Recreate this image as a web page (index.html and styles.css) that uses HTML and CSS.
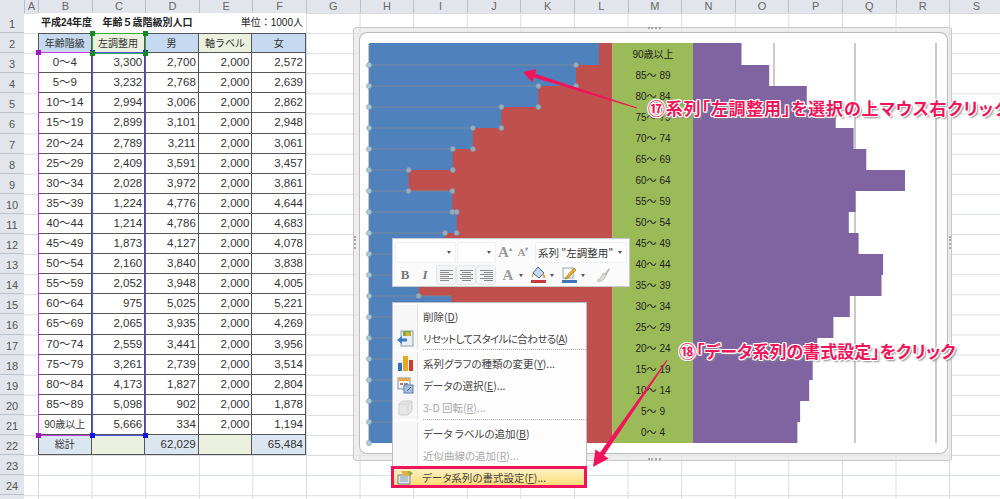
FILE: index.html
```html
<!DOCTYPE html>
<html lang="ja">
<head>
    <meta charset="UTF-8">
    <title>人口ピラミッド</title>
    <link rel="stylesheet" href="styles.css">
</head>
<body>
<div class="sheet">
    <div class="col-heads">
        <div class="corner"></div>
        <div class="col col-a">A</div>
        <div class="col">B</div><div class="col">C</div><div class="col">D</div><div class="col">E</div>
        <div class="col">F</div><div class="col">G</div><div class="col">H</div><div class="col">I</div>
        <div class="col">J</div><div class="col">K</div><div class="col">L</div><div class="col">M</div>
        <div class="col">N</div><div class="col">O</div><div class="col">P</div><div class="col">Q</div>
        <div class="col">R</div><div class="col">S</div>
    </div>

    <div class="sheet-body">
        <div class="row-heads">
            <div>1</div><div>2</div><div>3</div><div>4</div><div>5</div><div>6</div>
            <div>7</div><div>8</div><div>9</div><div>10</div><div>11</div><div>12</div>
            <div>13</div><div>14</div><div>15</div><div>16</div><div>17</div><div>18</div>
            <div>19</div><div>20</div><div>21</div><div>22</div><div>23</div><div>24</div>
        </div>

        <div class="cells">
            <div class="pop-table">
                <div class="title">平成24年度</div>
                <div class="title title-main">年齢５歳階級別人口</div>
                <div class="title title-unit">単位：1000人</div>

                <div class="cell head blue">年齢階級</div>
                <div class="cell head green">左調整用</div>
                <div class="cell head blue">男</div>
                <div class="cell head green">軸ラベル</div>
                <div class="cell head blue">女</div>

                <div class="cell age">0～4</div><div class="cell">3,300</div><div class="cell">2,700</div><div class="cell">2,000</div><div class="cell">2,572</div>
                <div class="cell age">5～9</div><div class="cell">3,232</div><div class="cell">2,768</div><div class="cell">2,000</div><div class="cell">2,639</div>
                <div class="cell age">10～14</div><div class="cell">2,994</div><div class="cell">3,006</div><div class="cell">2,000</div><div class="cell">2,862</div>
                <div class="cell age">15～19</div><div class="cell">2,899</div><div class="cell">3,101</div><div class="cell">2,000</div><div class="cell">2,948</div>
                <div class="cell age">20～24</div><div class="cell">2,789</div><div class="cell">3,211</div><div class="cell">2,000</div><div class="cell">3,061</div>
                <div class="cell age">25～29</div><div class="cell">2,409</div><div class="cell">3,591</div><div class="cell">2,000</div><div class="cell">3,457</div>
                <div class="cell age">30～34</div><div class="cell">2,028</div><div class="cell">3,972</div><div class="cell">2,000</div><div class="cell">3,861</div>
                <div class="cell age">35～39</div><div class="cell">1,224</div><div class="cell">4,776</div><div class="cell">2,000</div><div class="cell">4,644</div>
                <div class="cell age">40～44</div><div class="cell">1,214</div><div class="cell">4,786</div><div class="cell">2,000</div><div class="cell">4,683</div>
                <div class="cell age">45～49</div><div class="cell">1,873</div><div class="cell">4,127</div><div class="cell">2,000</div><div class="cell">4,078</div>
                <div class="cell age">50～54</div><div class="cell">2,160</div><div class="cell">3,840</div><div class="cell">2,000</div><div class="cell">3,838</div>
                <div class="cell age">55～59</div><div class="cell">2,052</div><div class="cell">3,948</div><div class="cell">2,000</div><div class="cell">4,005</div>
                <div class="cell age">60～64</div><div class="cell">975</div><div class="cell">5,025</div><div class="cell">2,000</div><div class="cell">5,221</div>
                <div class="cell age">65～69</div><div class="cell">2,065</div><div class="cell">3,935</div><div class="cell">2,000</div><div class="cell">4,269</div>
                <div class="cell age">70～74</div><div class="cell">2,559</div><div class="cell">3,441</div><div class="cell">2,000</div><div class="cell">3,956</div>
                <div class="cell age">75～79</div><div class="cell">3,261</div><div class="cell">2,739</div><div class="cell">2,000</div><div class="cell">3,514</div>
                <div class="cell age">80～84</div><div class="cell">4,173</div><div class="cell">1,827</div><div class="cell">2,000</div><div class="cell">2,804</div>
                <div class="cell age">85～89</div><div class="cell">5,098</div><div class="cell">902</div><div class="cell">2,000</div><div class="cell">1,878</div>
                <div class="cell age age-text">90歳以上</div><div class="cell">5,666</div><div class="cell">334</div><div class="cell">2,000</div><div class="cell">1,194</div>

                <div class="cell head total">総計</div>
                <div class="cell total-blank"></div>
                <div class="cell num-total">62,029</div>
                <div class="cell total-blank"></div>
                <div class="cell num-total">65,484</div>

                <!-- source ranges of the selected series -->
                <div class="range range-cats"><i class="knob tl"></i><i class="knob bl"></i></div>
                <div class="range range-vals"><i class="knob tl"></i><i class="knob tr"></i><i class="knob bl"></i><i class="knob br"></i></div>
                <div class="range range-name"><i class="knob tl"></i><i class="knob tr"></i><i class="knob bl"></i><i class="knob br"></i></div>
            </div>
        </div>
    </div>
</div>

<div class="chart">
    <i class="grip grip-top"></i>
    <i class="grip grip-bottom"></i>
    <i class="grip grip-side grip-left"></i>
    <i class="grip grip-side grip-right"></i>
    <div class="chart-area">
        <svg class="plot" viewBox="360 33 587 420" width="587" height="420">
            <rect class="series-red" x="369" y="43" width="243.5" height="400"/>
            <rect class="series-green" x="612.5" y="43" width="80.5" height="400"/>
            <path class="gridline" d="M774 43V443M855 43V443M936 43V443"/>
            <polygon class="series-blue" points="369,43 599,43 599,65 576,65 576,86 538.4,86 538.4,107 501.4,107 501.4,128 472.9,128 472.9,149 452.8,149 452.8,170 408.6,170 408.6,191 452.3,191 452.3,212 456.7,212 456.7,233 445,233 445,254 418.3,254 418.3,275 418.7,275 418.7,296 451.3,296 451.3,317 466.8,317 466.8,338 482.2,338 482.2,359 486.7,359 486.7,380 490.6,380 490.6,401 500.2,401 500.2,422 503,422 503,443 369,443"/>
            <polygon class="series-purple" points="693,43 741.5,43 741.5,65 769.2,65 769.2,86 806.8,86 806.8,107 835.7,107 835.7,128 853.6,128 853.6,149 866.3,149 866.3,170 905,170 905,191 855.6,191 855.6,212 848.8,212 848.8,233 858.6,233 858.6,254 883.1,254 883.1,275 881.5,275 881.5,296 849.8,296 849.8,317 833.4,317 833.4,338 817.3,338 817.3,359 812.7,359 812.7,380 809.2,380 809.2,401 800.1,401 800.1,422 797.4,422 797.4,443 693,443"/>

            <path class="sel-line" d="M369 44V443M369 65H576M369 86H538M369 107H501M369 128H473M369 149H453M369 170H409M369 191H452M369 212H457M369 233H445M369 254H418M369 275H419M369 296H451M369 317H467M369 338H482M369 359H487M369 380H491M369 401H500M369 422H503"/>

            <g class="knobs-left">
                <circle cx="369" cy="65" r="2.5"/><circle cx="369" cy="86" r="2.5"/><circle cx="369" cy="107" r="2.5"/><circle cx="369" cy="128" r="2.5"/>
                <circle cx="369" cy="149" r="2.5"/><circle cx="369" cy="170" r="2.5"/><circle cx="369" cy="191" r="2.5"/><circle cx="369" cy="212" r="2.5"/>
                <circle cx="369" cy="233" r="2.5"/><circle cx="369" cy="254" r="2.5"/><circle cx="369" cy="275" r="2.5"/><circle cx="369" cy="296" r="2.5"/>
                <circle cx="369" cy="317" r="2.5"/><circle cx="369" cy="338" r="2.5"/><circle cx="369" cy="359" r="2.5"/><circle cx="369" cy="380" r="2.5"/>
                <circle cx="369" cy="401" r="2.5"/><circle cx="369" cy="422" r="2.5"/><circle cx="369" cy="443" r="2.5"/>
            </g>
            <g class="knobs-right">
                <circle cx="576" cy="65" r="2.5"/>
                <circle cx="538.4" cy="86" r="2.5"/><circle cx="576" cy="86" r="2.5"/>
                <circle cx="501.4" cy="107" r="2.5"/><circle cx="538.4" cy="107" r="2.5"/>
                <circle cx="472.9" cy="128" r="2.5"/><circle cx="501.4" cy="128" r="2.5"/>
                <circle cx="452.8" cy="149" r="2.5"/><circle cx="472.9" cy="149" r="2.5"/>
                <circle cx="408.6" cy="170" r="2.5"/><circle cx="452.8" cy="170" r="2.5"/>
                <circle cx="408.6" cy="191" r="2.5"/><circle cx="452.3" cy="191" r="2.5"/>
                <circle cx="452.3" cy="212" r="2.5"/><circle cx="456.7" cy="212" r="2.5"/>
                <circle cx="445" cy="233" r="2.5"/><circle cx="456.7" cy="233" r="2.5"/>
                <circle cx="418.7" cy="296" r="2.5"/>
            </g>

            <g class="cat-labels">
                <text x="653" y="58">90歳以上</text>
                <text x="653" y="79">85～ 89</text>
                <text x="653" y="100">80～ 84</text>
                <text x="653" y="121">75～ 79</text>
                <text x="653" y="142">70～ 74</text>
                <text x="653" y="163">65～ 69</text>
                <text x="653" y="184">60～ 64</text>
                <text x="653" y="205">55～ 59</text>
                <text x="653" y="226">50～ 54</text>
                <text x="653" y="247">45～ 49</text>
                <text x="653" y="268">40～ 44</text>
                <text x="653" y="289">35～ 39</text>
                <text x="653" y="310">30～ 34</text>
                <text x="653" y="331">25～ 29</text>
                <text x="653" y="352">20～ 24</text>
                <text x="653" y="373">15～ 19</text>
                <text x="653" y="394">10～ 14</text>
                <text x="653" y="415">5～ 9</text>
                <text x="653" y="436">0～ 4</text>
            </g>
        </svg>
    </div>
</div>

<div class="mini-bar">
    <div class="bar-row">
        <div class="combo combo-font"><span class="caret"></span></div>
        <div class="combo combo-size"><span class="caret"></span></div>
        <div class="grow-btn">A<sup>▴</sup></div>
        <div class="grow-btn small">A<sup>▾</sup></div>
        <div class="combo combo-series">系列 "左調整用"<span class="caret"></span></div>
    </div>
    <div class="bar-row">
        <div class="tool tool-b">B</div>
        <div class="tool tool-i">I</div>
        <div class="align-btn">
            <svg width="13" height="11" viewBox="0 0 13 11"><path d="M0 .5H13M0 2.5H9M0 4.5H13M0 6.5H9M0 8.5H13M0 10.5H9"/></svg>
        </div>
        <div class="align-btn">
            <svg width="13" height="11" viewBox="0 0 13 11"><path d="M0 .5H13M2 2.5H11M0 4.5H13M2 6.5H11M0 8.5H13M2 10.5H11"/></svg>
        </div>
        <div class="align-btn">
            <svg width="13" height="11" viewBox="0 0 13 11"><path d="M0 .5H13M4 2.5H13M0 4.5H13M4 6.5H13M0 8.5H13M4 10.5H13"/></svg>
        </div>
        <div class="tool tool-a">A</div>
        <span class="caret"></span>
        <svg class="tool-icon" width="16" height="18" viewBox="0 0 16 18">
            <path d="M7 1l6 6-5 5-6-5z" fill="#c9d8ea" stroke="#36689f"/>
            <path d="M2 7c-1 2-2 3-1 4s2-1 1-4z" fill="#d9a020"/>
            <path d="M12 7c1 1 3 3 2 5-2 0-3-2-2-5z" fill="#e8a030"/>
            <rect x="0" y="14" width="15" height="3" fill="#c8383c"/>
        </svg>
        <span class="caret"></span>
        <svg class="tool-icon" width="16" height="18" viewBox="0 0 16 18">
            <rect x="1" y="2" width="10" height="10" fill="#fff" stroke="#8aa"/>
            <path d="M4 11l8-9 2 2-8 8-3 1z" fill="#e8b020" stroke="#9a6a10" stroke-width=".6"/>
            <rect x="0" y="14" width="15" height="3" fill="#3f74bd"/>
        </svg>
        <span class="caret"></span>
        <svg class="tool-icon brush" width="16" height="16" viewBox="0 0 16 16">
            <path d="M9 7l5-6 1 1-4 7z" fill="#bbb"/>
            <path d="M2 13c3-1 5-4 6-7l3 3c-1 3-5 6-8 6z" fill="#d8d8d0" stroke="#b5b5b0" stroke-width=".6"/>
        </svg>
    </div>
</div>

<div class="menu">
    <div class="menu-item"><span class="menu-icon"></span><span class="menu-text">削除(<u>D</u>)</span></div>
    <div class="menu-item">
        <span class="menu-icon">
            <svg width="17" height="17" viewBox="0 0 17 17">
                <rect x="4" y="1" width="12" height="15" fill="#e9eef2" stroke="#8b9fb4"/>
                <path d="M6 1h8v5H6z" fill="#7fa84a"/>
                <path d="M9 2l5 1-1 3-4 0z" fill="#e2b23a"/>
                <path d="M0 10l5-4v2.500h5v3H5V14z" fill="#3f7cc8"/>
            </svg>
        </span>
        <span class="menu-text tight">リセットしてスタイルに合わせる(<u>A</u>)</span>
    </div>
    <div class="menu-sep"></div>
    <div class="menu-item">
        <span class="menu-icon">
            <svg width="17" height="17" viewBox="0 0 17 17">
                <rect x="1" y="8" width="4" height="8" fill="#2f6fc0"/>
                <rect x="6" y="1" width="5" height="15" fill="#e8a820"/>
                <rect x="12" y="5" width="4" height="11" fill="#cc3b2c"/>
            </svg>
        </span>
        <span class="menu-text">系列グラフの種類の変更(<u>Y</u>)...</span>
    </div>
    <div class="menu-item">
        <span class="menu-icon">
            <svg width="17" height="17" viewBox="0 0 17 17">
                <rect x="1" y="1" width="12" height="11" fill="#eef3f8" stroke="#7d94ad"/>
                <rect x="1" y="1" width="12" height="3" fill="#e8a84a"/>
                <rect x="3" y="6" width="3" height="2" fill="#d9734a"/>
                <rect x="7" y="6" width="4" height="2" fill="#7d9cc4"/>
                <rect x="7" y="8" width="9" height="8" fill="#a8bedb" stroke="#5f7ea6"/>
                <path d="M10 14l4-4" stroke="#3c5f90"/>
            </svg>
        </span>
        <span class="menu-text">データの選択(<u>E</u>)...</span>
    </div>
    <div class="menu-item disabled">
        <span class="menu-icon">
            <svg width="17" height="17" viewBox="0 0 17 17">
                <path d="M2 5l4-3h9v10l-4 4H2z" fill="#e6e6e6" stroke="#cfcfcf"/>
                <path d="M2 5h9v11M11 5l4-3" fill="none" stroke="#d4d4d4"/>
            </svg>
        </span>
        <span class="menu-text">3-D 回転(<u>R</u>)...</span>
    </div>
    <div class="menu-sep"></div>
    <div class="menu-item"><span class="menu-icon"></span><span class="menu-text">データ ラベルの追加(<u>B</u>)</span></div>
    <div class="menu-item disabled"><span class="menu-icon"></span><span class="menu-text">近似曲線の追加(<u>R</u>)...</span></div>
    <div class="menu-item active">
        <span class="menu-icon">
            <svg width="17" height="15" viewBox="0 0 17 15">
                <rect x="1" y="5" width="12" height="9" fill="#dfe6ee" stroke="#6f8297"/>
                <path d="M3 7h8M3 9h8M3 11h8" stroke="#8ca0b5"/>
                <path d="M4 1h10l-2 5H7z" fill="#e3b23a"/>
                <path d="M11 1l5 2-3 3z" fill="#7fa84a"/>
            </svg>
        </span>
        <span class="menu-text">データ系列の書式設定(<u>F</u>)...</span>
    </div>
</div>

<svg class="arrows" width="1000" height="499" viewBox="0 0 1000 499">
    <polygon points="523,72 536.500,68.900 535,73.700 637,107.500 637,108.500 533.800,77.500 532.300,82.300"/>
    <polygon points="593,467 595.400,449.400 600,452.600 666.500,360 667.500,360.500 604,455.400 608.600,458.600"/>
</svg>

<div class="note note-17">⑰系列「左調整用」を選択の上マウス右クリック</div>
<div class="note note-18">⑱「データ系列の書式設定」をクリック</div>
</body>
</html>
```

FILE: styles.css
```css
html, body {
    margin: 0;
    padding: 0;
}

body {
    position: relative;
    width: 1000px;
    height: 499px;
    overflow: hidden;
    background-color: #fff;
    color: #333;
    font-family: "Liberation Sans", "Noto Sans CJK JP", sans-serif;
}

/* sheet */

.col-heads {
    display: flex;
    height: 13px;
    background-color: #e2e6ec;
}

.corner {
    width: 24px;
    flex: none;
}

.col {
    flex: none;
    box-sizing: border-box;
    width: 53.6px;
    border-left: 1px solid #b9c0c9;
    font-size: 11px;
    line-height: 13px;
    text-align: center;
    color: #666;
}

.col-a {
    width: 14px;
}

.sheet-body {
    display: flex;
    height: 486px;
}

.row-heads {
    flex: none;
    width: 24px;
    background-color: #e2e6ec;
}

.row-heads div {
    box-sizing: border-box;
    height: 20.1px;
    border-bottom: 1px solid #b9c0c9;
    font-size: 11px;
    line-height: 22px;
    text-align: center;
    color: #555;
}

.cells {
    flex: 1;
    padding-left: 14px;
    background-image:
        linear-gradient(to right, #d9dcdf 1px, transparent 1px),
        linear-gradient(to bottom, #d9dcdf 1px, transparent 1px);
    background-size: 53.6px 20.1px;
    background-position: 14px 0;
}

.pop-table {
    position: relative;
    display: grid;
    grid-template-columns: repeat(5, 53.6px);
    grid-template-rows: repeat(22, 20.1px);
    width: 268px;
}

.title {
    background-color: #fff;
    font-size: 10px;
    font-weight: bold;
    line-height: 20px;
    padding-left: 3px;
    white-space: nowrap;
    color: #222;
}

.title-main {
    grid-column: 2 / span 2;
    padding-left: 11px;
}

.title-unit {
    grid-column: 4 / span 2;
    padding: 0 3px 0 0;
    font-weight: normal;
    text-align: right;
}

.cell {
    box-sizing: border-box;
    border-right: 1px solid #555;
    border-bottom: 1px solid #555;
    padding-right: 2px;
    background-color: #fff;
    font-size: 11.5px;
    line-height: 19px;
    text-align: right;
}

.cell:nth-child(5n + 4) {
    border-left: 1px solid #555;
}

.head {
    padding: 0;
    font-size: 10px;
    text-align: center;
}

.pop-table .head:nth-child(n + 4):nth-child(-n + 8) {
    border-top: 1px solid #555;
}

.blue {
    background-color: #c5d9f1;
}

.green {
    background-color: #ebf1de;
}

.age {
    padding: 0;
    text-align: center;
}

.age-text {
    font-size: 10px;
}

.total {
    background-color: #dce6f1;
}

.total-blank {
    background-color: #ebf1de;
}

.num-total {
    background-color: #dce6f1;
}

/* absolute inside the grid: the grid area is the box, cells keep their places */
.range {
    position: absolute;
    left: 0;
    right: -1px;
    top: 0;
    bottom: -1px;
    box-sizing: border-box;
    pointer-events: none;
}

.range-name {
    grid-column: 2 / 3;
    grid-row: 2 / 3;
    border: 1.5px solid #3aa84a;
}

.range-cats {
    grid-column: 1 / 2;
    grid-row: 3 / 22;
    top: -1px;
    border: 1.5px solid #c03fe0;
    border-right: 0;
}

.range-vals {
    grid-column: 2 / 3;
    grid-row: 3 / 22;
    top: -1px;
    border: 1.5px solid #4a55f0;
}

.knob {
    position: absolute;
    width: 5px;
    height: 5px;
}

.range-name .knob { background-color: #128a22; }
.range-cats .knob { background-color: #a012c0; }
.range-vals .knob { background-color: #1414e0; }

.tl { left: -3px; top: -3px; }
.tr { right: -3px; top: -3px; }
.bl { left: -3px; bottom: -3px; }
.br { right: -3px; bottom: -3px; }

/* chart */

.chart {
    position: absolute;
    left: 353px;
    top: 27px;
    box-sizing: border-box;
    width: 599px;
    height: 434px;
    padding: 5px 4px 7px 6px;
    background-color: rgba(232, 232, 232, 0.75);
    border: 1px solid #c8c8c8;
    border-radius: 3px;
}

.chart-area {
    width: 587px;
    height: 420px;
    overflow: hidden;
    background-color: #fff;
    border-radius: 7px;
    box-shadow: 0 0 0 1px #bcbcbc;
}

.plot {
    display: block;
}

.series-red { fill: #c0504d; }
.series-green { fill: #9bbb59; }
.series-blue { fill: #4f81bd; }
.series-purple { fill: #8064a2; }

.gridline {
    fill: none;
    stroke: #a6a6a6;
    stroke-width: 1.2;
}

.sel-line {
    fill: none;
    stroke: #7d8a96;
    stroke-width: 1;
}

.knobs-left circle {
    fill: #a5cfe0;
    stroke: #7f9fb2;
    stroke-width: 0.7;
}

.knobs-right circle {
    fill: #96aec2;
    stroke: #7f95a8;
    stroke-width: 0.7;
}

.cat-labels text {
    font-size: 10px;
    fill: #222;
    text-anchor: middle;
}

.grip {
    position: absolute;
    border-top: 2px dotted #a8a8a8;
}

.grip-top {
    left: 294px;
    top: -1px;
    width: 13px;
}

.grip-bottom {
    left: 294px;
    bottom: 0;
    width: 13px;
}

.grip-side {
    top: 208px;
    height: 13px;
    border-top: 0;
    border-left: 2px dotted #a8a8a8;
}

.grip-left { left: 0; }
.grip-right { right: 0; }

/* mini toolbar */

.mini-bar {
    position: absolute;
    left: 392px;
    top: 238px;
    box-sizing: border-box;
    width: 238px;
    height: 49px;
    padding: 2px 2px;
    background-color: #fbfbfc;
    border: 1px solid #c6cbd1;
    color: #888;
}

.bar-row {
    display: flex;
    align-items: center;
    height: 22px;
}

.bar-row + .bar-row {
    margin-top: 1px;
}

.combo {
    box-sizing: border-box;
    display: flex;
    align-items: center;
    justify-content: flex-end;
    height: 21px;
    padding-right: 4px;
    background-color: #fff;
    border: 1px solid #edeff1;
    border-radius: 2px;
}

.combo-font { width: 61px; }
.combo-size { width: 39px; margin-left: 1px; }

.combo-series {
    width: 92px;
    margin-left: 3px;
    justify-content: space-between;
    padding-left: 2px;
    font-family: "Noto Sans CJK JP", sans-serif;
    font-size: 10.5px;
    color: #333;
    white-space: nowrap;
}

.caret {
    flex: none;
    width: 0;
    height: 0;
    border-left: 2.5px solid transparent;
    border-right: 2.5px solid transparent;
    border-top: 3px solid #555;
}

.grow-btn {
    width: 18px;
    font-family: "Liberation Serif", serif;
    font-size: 15px;
    font-weight: bold;
    line-height: 20px;
    text-align: center;
    white-space: nowrap;
    color: #999;
}

.grow-btn sup {
    font-size: 6px;
    line-height: 0;
}

.grow-btn.small {
    font-size: 11px;
}

.tool {
    width: 20px;
    font-family: "Liberation Serif", serif;
    font-size: 13px;
    font-weight: bold;
    text-align: center;
    color: #777;
}

.tool-i {
    font-style: italic;
    margin-right: 1px;
}

.align-btn {
    box-sizing: border-box;
    display: flex;
    align-items: center;
    justify-content: center;
    width: 20px;
    height: 20px;
    background-color: #f4f5f7;
    border: 1px solid #e4e6e9;
    border-radius: 3px;
}

.align-btn path {
    stroke: #888;
    fill: none;
}

.tool-a {
    width: 22px;
    margin-left: 1px;
    font-size: 15px;
    color: #999;
}

.tool-icon {
    flex: none;
    margin: 0 3px 0 8px;
}

.tool-icon.brush {
    margin-left: 10px;
}

/* context menu */

.menu {
    position: absolute;
    left: 392px;
    top: 302px;
    box-sizing: border-box;
    width: 195px;
    height: 186px;
    padding-top: 2px;
    background-color: #fdfdfd;
    border: 1px solid #b9bec4;
    border-bottom: 0;
    font-family: "Noto Sans CJK JP", sans-serif;
    font-size: 10.5px;
    font-feature-settings: "palt";
    color: #444;
}

.menu-item {
    display: flex;
    align-items: center;
    height: 22.2px;
    white-space: nowrap;
}

.menu-icon {
    flex: none;
    box-sizing: border-box;
    display: flex;
    align-items: center;
    justify-content: center;
    width: 25px;
    height: 100%;
    background-color: #f7f7f7;
    border-right: 1px solid #e2e2e2;
}

.menu-text {
    padding-left: 5px;
}

.menu-text.tight {
    letter-spacing: -0.6px;
}

.menu-sep {
    box-sizing: border-box;
    height: 3px;
    margin-left: 30px;
    border-top: 1px dotted #aaa;
}

.disabled {
    color: #aaa;
}

.active {
    box-sizing: border-box;
    height: 22px;
    margin: 0 -1px 0 -2px;
    background: linear-gradient(#fdf2c2, #fbdc78);
    border: 3px solid #f0145a;
}

.active .menu-icon {
    width: 23px;
    background: none;
    border-right: 0;
}

/* annotations */

.arrows {
    position: absolute;
    left: 0;
    top: 0;
    pointer-events: none;
}

.arrows polygon {
    fill: #f0145a;
}

.note {
    position: absolute;
    font-family: "Noto Sans CJK JP", sans-serif;
    font-size: 17px;
    font-weight: bold;
    font-feature-settings: "palt";
    line-height: 20px;
    white-space: nowrap;
    color: #f0145a;
    text-shadow:
        -1px 0 0 #fff, 1px 0 0 #fff, 0 -1px 0 #fff, 0 1px 0 #fff,
        -1px -1px 0 #fff, 1px -1px 0 #fff, -1px 1px 0 #fff, 1px 1px 0 #fff,
        2px 2px 2px #888;
}

.note-17 {
    left: 648px;
    top: 98px;
    letter-spacing: 0.8px;
}

.note-18 {
    left: 679px;
    top: 341px;
}
```
